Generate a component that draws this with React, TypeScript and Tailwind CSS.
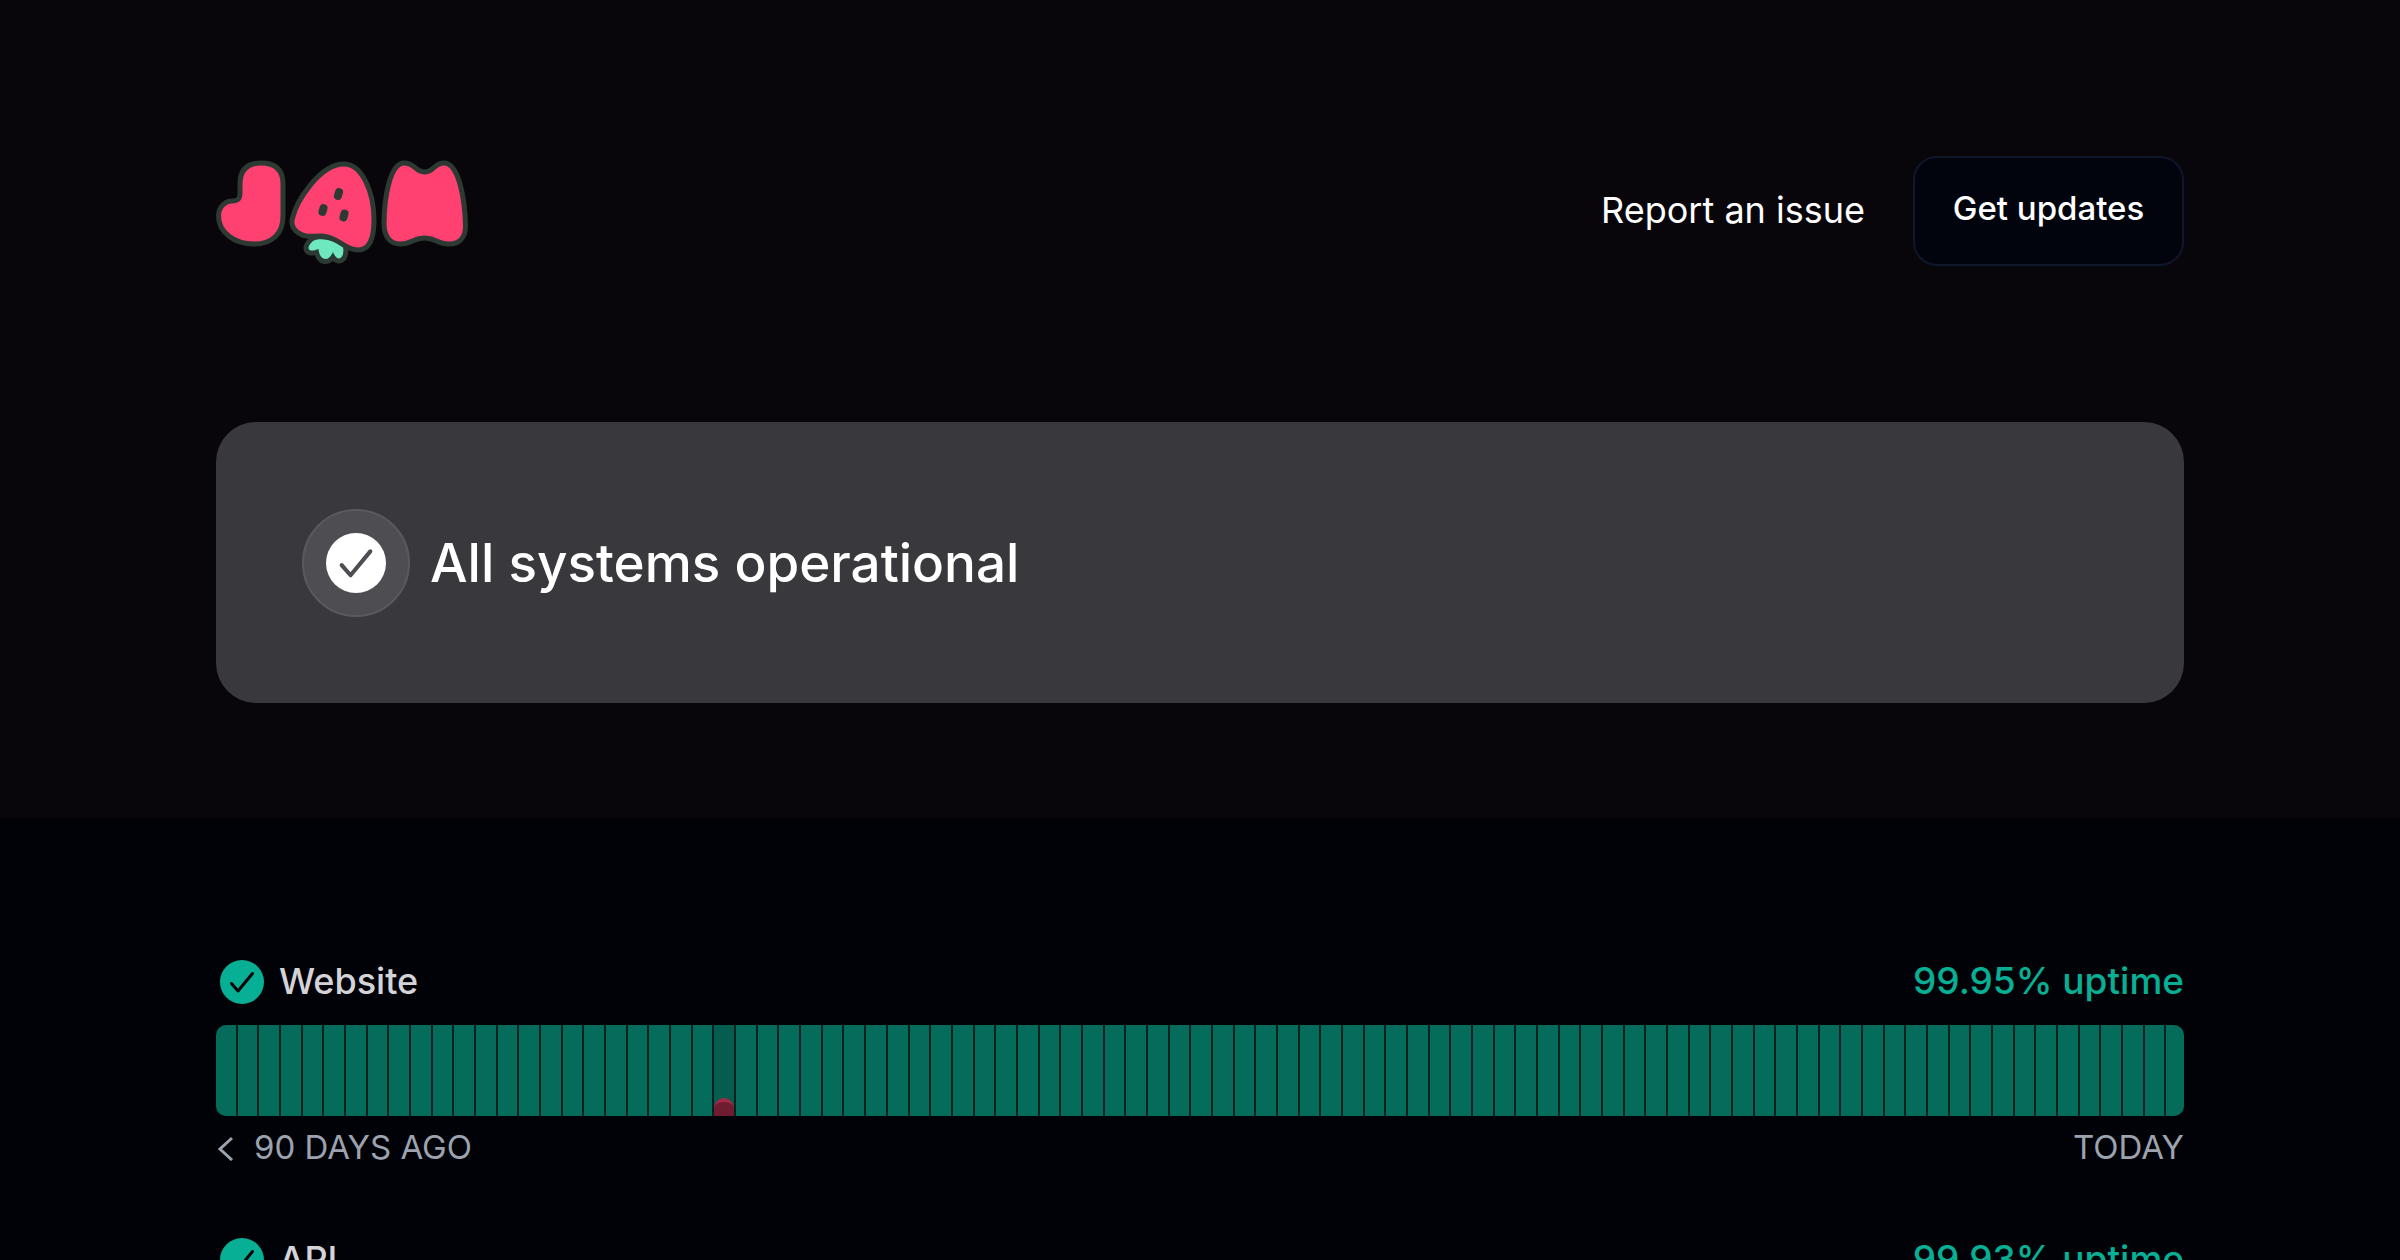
const components = [
  { name: 'Website', uptime: '99.95%', incidentDay: 23 },
  { name: 'API', uptime: '99.93%', incidentDay: 23 },
]

const days = Array.from({ length: 91 }, (_, i) => i)

function JamLogo() {
  return (
    <svg width="256" height="110" viewBox="0 0 256 110" role="img" aria-label="Jam">
      <g stroke="#2d3a33" strokeWidth="5" strokeLinejoin="round" fill="#ff4171">
        <path d="M24 28C24 14 31 7 45 7C60 7 67 14 67 28V60C67 78 56 88 38 88C18 88 2.500 76 2.500 60C2.500 51 9 45 16 45C22 45 24 43 24 37Z" />
        {/* Leaves */}
        <path
          d="M97 85C103 81 120 84 127 91C128 96 127 102 123 102.500C120 102 118 99 117 96C115 100 113 103 109.500 103C105 103 103 98 102.500 93C99 94.500 93 96 92.500 92C92.500 89 95 87 97 85Z"
          fill="#6fe8bf"
          strokeWidth="10"
          paintOrder="stroke"
        />
        <path d="M128 8C146 8 158 36 158 64C158 82 154 94 142 94C128 94 123 81 106 80C98 79.500 96 81 90 80C81 78 75 72 76 64C80 45 104 8 128 8Z" />
        <path d="M168 68C168 42 174 7 188 7C199 7 199 16 208.500 16C218 16 218 7 228 7C243 7 249 44 249.500 70C249.500 82 243 88 233 88C222 88 219 82 208.500 82C198 82 195 88 184 88C174 88 168 80 168 68Z" />
      </g>
      {/* Seeds */}
      <g fill="#2d3a33">
        <rect x="118.500" y="32" width="8" height="12" rx="4" transform="rotate(16 122.500 38)" />
        <rect x="103" y="48" width="8" height="12" rx="4" transform="rotate(16 107 54)" />
        <rect x="124" y="53.500" width="8" height="12" rx="4" transform="rotate(16 128 59.500)" />
      </g>
    </svg>
  )
}

function CheckBadge({ className, markClassName }: { className: string; markClassName: string }) {
  return (
    <svg viewBox="0 0 44 44" className={className} fill="none" aria-hidden="true">
      <circle cx="22" cy="22" r="22" fill="currentColor" />
      <path
        d="M11.500 23.500L18 31L32.500 13.500"
        className={markClassName}
        strokeWidth="3"
        strokeLinecap="round"
        strokeLinejoin="round"
      />
    </svg>
  )
}

function UptimeBar({ incidentDay }: { incidentDay: number }) {
  return (
    <div className="flex h-[91px] gap-[2px] overflow-hidden rounded-[10px] bg-[#01221e]">
      {days.map(day => (
        <div
          key={day}
          className={`flex items-end ${day === 90 ? 'w-[18px]' : 'flex-1'} ${
            day === incidentDay ? 'bg-[#055d4f]' : 'bg-[#056b5a]'
          }`}
        >
          {day === incidentDay && (
            <div className="h-[18px] w-full rounded-t-[10px] border-t-4 border-[#9f2a47] bg-[#6f1c31]" />
          )}
        </div>
      ))}
    </div>
  )
}

export default function App() {
  return (
    <div className="h-screen overflow-hidden bg-[#010207] font-['Inter',sans-serif]">
      {/* Header */}
      <div className="bg-[#08060b] px-[216px] pt-[156px] pb-[115px]">
        <header className="flex h-[110px] items-center justify-between">
          <a href="#">
            <JamLogo />
          </a>
          <div className="flex items-center gap-12">
            <a href="#" className="pb-0.5 text-[36px] text-white">
              Report an issue
            </a>
            <button className="h-[110px] w-[271px] rounded-[24px] border-2 border-[#0f172a] bg-[#02040d] pb-1 text-[33px] font-medium text-white">
              Get updates
            </button>
          </div>
        </header>

        {/* Current status */}
        <div className="mt-[156px] flex h-[281px] items-center gap-5 rounded-[40px] bg-[#39383d] px-[86px]">
          <div className="flex size-[108px] items-center justify-center rounded-full border-2 border-[#5a595e] bg-[#4e4d52]">
            <CheckBadge className="size-[60px] text-white" markClassName="stroke-[#4e4d52]" />
          </div>
          <h1 className="pt-0.5 text-[53px] font-medium text-white">All systems operational</h1>
        </div>
      </div>

      {/* Components */}
      <main className="flex flex-col gap-[68px] px-[216px] pt-[140px]">
        {components.map(component => (
          <section key={component.name}>
            <div className="mb-[19px] flex h-12 items-center justify-between">
              <div className="flex items-center gap-[15px] pl-1">
                <CheckBadge className="size-11 text-[#07b095]" markClassName="stroke-[#010207]" />
                <h2 className="pb-0.5 text-[36px] font-medium text-[#d4d4d8]">{component.name}</h2>
              </div>
              <p className="pb-0.5 text-[37px] font-medium text-[#07b095]">{component.uptime} uptime</p>
            </div>
            <UptimeBar incidentDay={component.incidentDay} />
            <div className="mt-3 flex h-10 items-center justify-between text-[33px] text-[#9ca3af]">
              <div className="flex items-center gap-5">
                <button aria-label="Previous period">
                  <svg width="18" height="26" viewBox="0 0 18 26" fill="none">
                    <path d="M16 3L4 14L16 25" stroke="currentColor" strokeWidth="3" />
                  </svg>
                </button>
                <span>90 DAYS AGO</span>
              </div>
              <span>TODAY</span>
            </div>
          </section>
        ))}
      </main>
    </div>
  )
}
